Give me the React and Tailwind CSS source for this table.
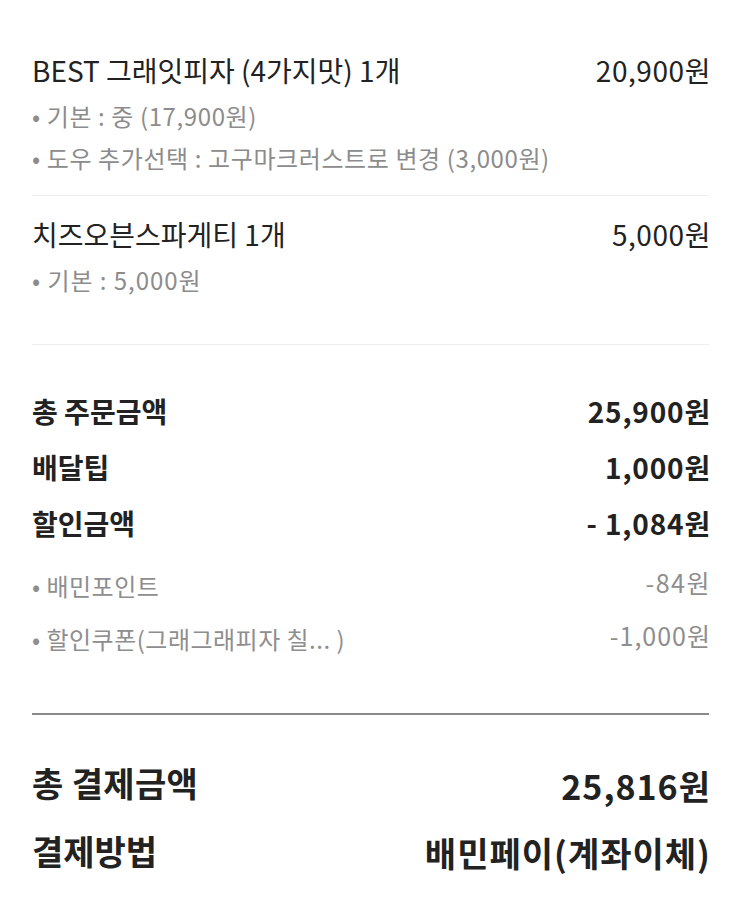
export default function App() {
  const font = { fontFamily: '"Noto Sans CJK KR", "Noto Sans", sans-serif' };
  return (
    <div className="w-[740px] h-[914px] bg-white pl-[32px] pr-[29px] pt-[50px] text-[#222222]" style={font}>
      {/* Item 1 */}
      <div className="flex justify-between items-center h-[40px] text-[28px] leading-[40px]">
        <span>BEST 그래잇피자 (4가지맛) 1개</span>
        <span className="tracking-[0.02em]">20,900원</span>
      </div>
      <div className="mt-[5px] text-[24px] leading-[42px] text-[#8c8c8c] tracking-[0.025em]">
        <div>• 기본 : 중 (17,900원)</div>
        <div>• 도우 추가선택 : 고구마크러스트로 변경 (3,000원)</div>
      </div>
      <div className="mt-[16px] mr-[2px] h-px bg-[#eeeeee]" />

      {/* Item 2 */}
      <div className="mt-[18px] flex justify-between items-center h-[40px] text-[28px] leading-[40px]">
        <span>치즈오븐스파게티 1개</span>
        <span className="tracking-[0.02em]">5,000원</span>
      </div>
      <div className="mt-[5px] text-[24px] leading-[42px] text-[#8c8c8c] tracking-[0.04em]">
        <div>• 기본 : 5,000원</div>
      </div>
      <div className="mt-[43px] mr-[2px] h-px bg-[#eeeeee]" />

      {/* Summary */}
      <div className="mt-[38px] text-[28px] font-bold">
        <div className="flex justify-between items-center h-[56px]">
          <span>총 주문금액</span>
          <span className="tracking-[0.03em]">25,900원</span>
        </div>
        <div className="flex justify-between items-center h-[56px]">
          <span>배달팁</span>
          <span className="tracking-[0.03em]">1,000원</span>
        </div>
        <div className="flex justify-between items-center h-[56px]">
          <span>할인금액</span>
          <span className="tracking-[0.03em]">- 1,084원</span>
        </div>
      </div>
      <div className="mt-[8px] text-[24px] text-[#8e8e8e]">
        <div className="flex justify-between items-center h-[53px]">
          <span className="tracking-[0.02em]">• 배민포인트</span>
          <span className="-mt-[6px] text-[25px] tracking-[0.06em]">-84원</span>
        </div>
        <div className="flex justify-between items-center h-[53px]">
          <span className="tracking-[0.02em]">• 할인쿠폰(그래그래피자 칠... )</span>
          <span className="-mt-[6px] text-[25px] tracking-[0.04em]">-1,000원</span>
        </div>
      </div>
      <div className="mt-[48px] mr-[2px] h-[2px] bg-[#8a8a8a]" />

      {/* Total */}
      <div className="mt-[33px] font-bold">
        <div className="flex justify-between items-center h-[68px] text-[34px]">
          <span className="tracking-[0.01em]">총 결제금액</span>
          <span className="text-[34px] mt-[6px] tracking-[0.03em]">25,816원</span>
        </div>
        <div className="flex justify-between items-center h-[68px] text-[34px]">
          <span>결제방법</span>
          <span className="text-[34px] mt-[4px] tracking-[0.03em]">배민페이(계좌이체)</span>
        </div>
      </div>
    </div>
  );
}
